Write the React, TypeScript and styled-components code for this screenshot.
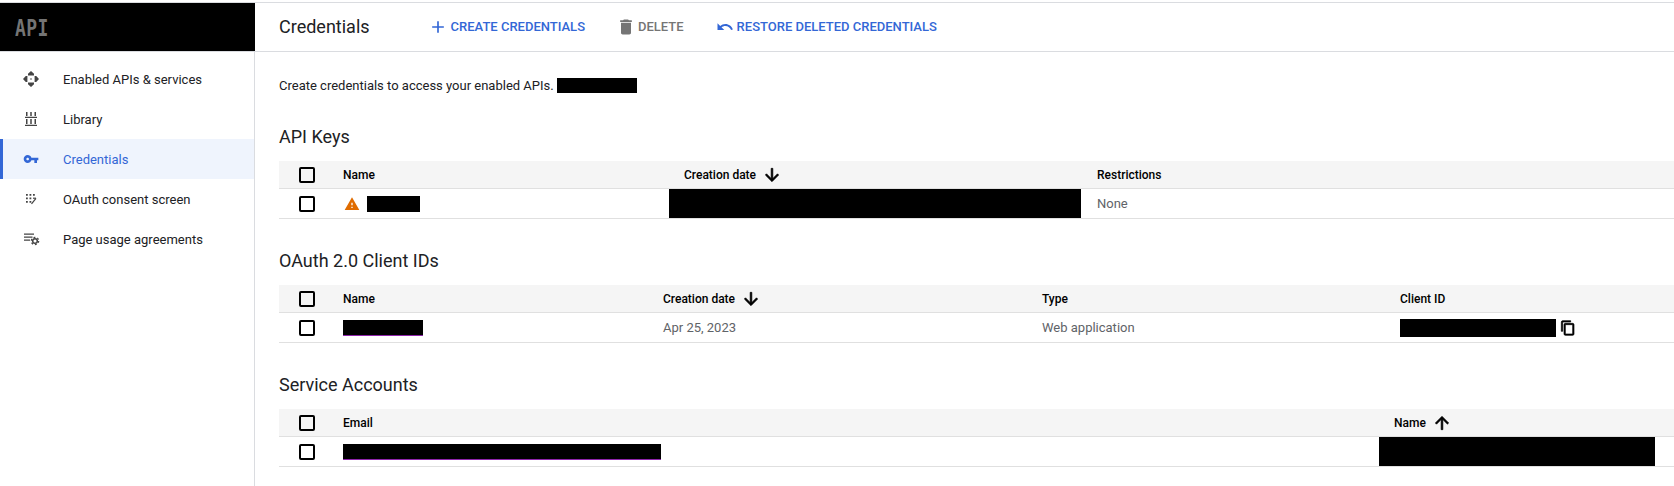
import React from 'react'
import styled, { createGlobalStyle } from 'styled-components'

const blue = '#3367d6'

const GlobalStyle = createGlobalStyle`
  html, body {
    margin: 0;
    background: #fff;
    font-family: Roboto, "Liberation Sans", sans-serif;
    font-size: 13px;
    color: #202124;
  }
`

const Page = styled.div`
  display: flex;
  margin-top: 2px;
  border-top: 1px solid #dadce0;
  height: 483px;
  overflow: hidden;
`

const Sidebar = styled.aside`
  flex: 0 0 255px;
  display: flex;
  flex-direction: column;
`

const Brand = styled.div`
  height: 48px;
  background: #000;
  border-bottom: 1px solid #dadce0;
  display: flex;
  align-items: center;
  padding-left: 15px;
`

const BrandMark = styled.span`
  font-family: "DejaVu Sans Mono", monospace;
  font-weight: 700;
  font-size: 18px;
  letter-spacing: 0.4px;
  color: #747474;
  transform: scaleY(1.25);
`

const Nav = styled.nav`
  flex: 1;
  padding-top: 7px;
  border-right: 1px solid #dadce0;
`

const NavItem = styled.div<{ $active?: boolean }>`
  height: 40px;
  display: flex;
  align-items: center;
  gap: 23px;
  padding-left: ${({ $active }) => ($active ? 19 : 22)}px;
  border-left: ${({ $active }) => ($active ? `3px solid ${blue}` : 'none')};
  background: ${({ $active }) => ($active ? '#eff4fd' : 'transparent')};
  color: ${({ $active }) => ($active ? blue : '#202124')};
`

const NavIcon = styled.svg`
  flex: 0 0 18px;
  width: 18px;
  height: 18px;
  fill: currentColor;
`

const Main = styled.main`
  flex: 1;
  min-width: 0;
`

const Toolbar = styled.header`
  height: 47px;
  padding: 0 0 1px 24px;
  border-bottom: 1px solid #dadce0;
  display: flex;
  align-items: center;
  gap: 31px;
`

const PageTitle = styled.h1`
  margin: 0 27px 0 0;
  font-size: 18px;
  font-weight: 400;
  color: #202124;
`

const ToolButton = styled.div<{ $gap?: number }>`
  display: flex;
  align-items: center;
  gap: ${({ $gap }) => $gap ?? 3}px;
  font-size: 13px;
  font-weight: 500;
  color: ${blue};
`

const DeleteButton = styled(ToolButton)`
  padding-right: 1px;
  color: #757575;
`

const Glyph = styled.svg<{ $size: number }>`
  flex: none;
  display: block;
  width: ${({ $size }) => $size}px;
  height: ${({ $size }) => $size}px;
  fill: currentColor;
`

const Content = styled.div`
  padding: 23px 0 0 24px;
`

const Intro = styled.p`
  margin: 0;
  height: 20px;
  display: flex;
  align-items: center;
  gap: 3px;
`

const Section = styled.section`
  margin-top: 30px;
`

const SectionTitle = styled.h2`
  margin: 0 0 12px;
  font-size: 18px;
  line-height: 24px;
  font-weight: 400;
  color: #202124;
`

const Row = styled.div<{ $columns: string; $head?: boolean }>`
  display: grid;
  grid-template-columns: ${({ $columns }) => $columns};
  height: ${({ $head }) => ($head ? 27 : 29)}px;
  align-items: center;
  border-bottom: 1px solid #e0e0e0;
  background: ${({ $head }) => ($head ? '#f5f5f5' : '#fff')};
  color: ${({ $head }) => ($head ? '#000' : '#5f6368')};
  font-size: ${({ $head }) => ($head ? 12 : 13)}px;
  font-weight: ${({ $head }) => ($head ? 500 : 400)};
`

const Cell = styled.div<{ $inset?: number }>`
  display: flex;
  align-items: center;
  height: 100%;
  min-width: 0;
  padding-left: ${({ $inset }) => $inset ?? 0}px;
`

const Checkbox = styled.span`
  box-sizing: border-box;
  display: block;
  width: 16px;
  height: 16px;
  margin-left: 20px;
  border: 2px solid #000;
  border-radius: 2px;
`

const Redacted = styled.span<{ $w: number; $h: number; $link?: boolean }>`
  display: block;
  flex: none;
  width: ${({ $w }) => $w}px;
  height: ${({ $h }) => $h}px;
  background: #000;
  border-bottom: ${({ $link }) => ($link ? '1px solid #8e24aa' : 'none')};
`

const SortIcon = styled(Glyph)`
  color: #000;
  margin-left: 6px;
  stroke: currentColor;
  stroke-width: 0.8;
`

const WarningIcon = styled(Glyph)`
  color: #e06c00;
  margin-right: 7px;
  margin-left: 1px;
`

const CopyIcon = styled(Glyph)`
  color: #000;
  margin-left: 4px;
  stroke: currentColor;
  stroke-width: 1;
`

const paths = {
  add: 'M19 13h-6v6h-2v-6H5v-2h6V5h2v6h6v2z',
  trash: 'M6 19c0 1.1.9 2 2 2h8c1.1 0 2-.9 2-2V7H6v12zM19 4h-3.5l-1-1h-5l-1 1H5v2h14V4z',
  undo: 'M12.5 8c-2.65 0-5.05.99-6.9 2.6L2 7v9h9l-3.62-3.62c1.39-1.16 3.16-1.88 5.12-1.88 3.54 0 6.55 2.31 7.6 5.5l2.37-.78C21.08 11.03 17.15 8 12.5 8z',
  warning: 'M1 21h22L12 2 1 21zm12-3h-2v-2h2v2zm0-4h-2v-4h2v4z',
  down: 'M20 12l-1.41-1.41L13 16.17V4h-2v12.17l-5.58-5.6L4 12l8 8 8-8z',
  up: 'M4 12l1.41 1.41L11 7.83V20h2V7.83l5.58 5.59L20 12l-8-8-8 8z',
  copy: 'M16 1H4c-1.1 0-2 .9-2 2v14h2V3h12V1zm3 4H8c-1.1 0-2 .9-2 2v14c0 1.1.9 2 2 2h11c1.1 0 2-.9 2-2V7c0-1.1-.9-2-2-2zm0 16H8V7h11v14z',
}

const ApisIcon = () => (
  <NavIcon viewBox="0 0 18 18" style={{ color: '#444' }}>
    <path d="M9 1l3 2.8v1.6H6V3.800zM9 17l-3-2.800v-1.600h6v1.600zM1 9l2.800-3h1.600v6H3.800zM17 9l-2.800 3h-1.600V6h1.600z" />
    <circle cx="9" cy="9" r="2.600" fill="#fff" />
    <circle cx="9" cy="9" r="1.100" fill="#999" />
  </NavIcon>
)

const LibraryIcon = () => (
  <NavIcon viewBox="0 0 18 18" style={{ color: '#444' }}>
    <path d="M4 2h1.500v4H4zM8.250 2h1.500v4h-1.500zM12.500 2H14v4h-1.500zM3 6.800h12v1.200H3zM4 9h1.500v5H4zM8.250 9h1.500v5h-1.500zM12.500 9H14v5h-1.500zM3 14.800h12V16H3z" />
  </NavIcon>
)

const KeyIcon = () => (
  <NavIcon viewBox="-1.500 -1.500 27 27">
    <path d="M12.65 10C11.83 7.67 9.610 6 7 6c-3.310 0-6 2.690-6 6s2.690 6 6 6c2.610 0 4.830-1.670 5.650-4H17v4h4v-4h2v-4H12.650zM7 14c-1.100 0-2-.9-2-2s.9-2 2-2 2 .9 2 2-.9 2-2 2z" />
  </NavIcon>
)

const ConsentIcon = () => (
  <NavIcon viewBox="0 0 18 18" style={{ color: '#444' }}>
    <path d="M4 4h1.800v1.800H4zM7.500 4h1.800v1.800H7.500zM11 4h1.800v1.800H11zM4 7.500h1.800v1.800H4zM7.500 7.500h1.800v1.800H7.500zM4 11h1.800v1.800H4zM7.500 11h1.800v1.800H7.500z" />
    <path d="M9.500 13.800l4.500-5.500" fill="none" stroke="currentColor" strokeWidth="1.200" />
    <path d="M11 8.200h3" fill="none" stroke="currentColor" strokeWidth="1.200" />
  </NavIcon>
)

const UsageIcon = () => (
  <NavIcon viewBox="0 0 18 18" style={{ color: '#444' }}>
    <path d="M2 3.500h10v1.200H2zM2 6.500h8.500v1.200H2zM2 9.500h6v1.200H2z" />
    <circle cx="13" cy="11" r="2.300" fill="none" stroke="currentColor" strokeWidth="1.500" />
    <circle cx="13" cy="11" r="3.700" fill="none" stroke="currentColor" strokeWidth="1.200" strokeDasharray="1.900 1.970" />
  </NavIcon>
)

const navItems = [
  { label: 'Enabled APIs & services', icon: <ApisIcon /> },
  { label: 'Library', icon: <LibraryIcon /> },
  { label: 'Credentials', icon: <KeyIcon />, active: true },
  { label: 'OAuth consent screen', icon: <ConsentIcon /> },
  { label: 'Page usage agreements', icon: <UsageIcon /> },
]

const keyColumns = '64px 326px 412px 1fr'
const clientColumns = '64px 320px 379px 358px 1fr'
const accountColumns = '64px 1036px 1fr'

function Icon({ d, size }: { d: string; size: number }) {
  return (
    <Glyph viewBox="0 0 24 24" $size={size}>
      <path d={d} />
    </Glyph>
  )
}

function Sort({ dir }: { dir: 'up' | 'down' }) {
  return (
    <SortIcon viewBox="0 0 24 24" $size={20}>
      <path d={paths[dir]} />
    </SortIcon>
  )
}

export default function App() {
  return (
    <>
      <GlobalStyle />
      <Page>
        <Sidebar>
          <Brand>
            <BrandMark>API</BrandMark>
          </Brand>
          <Nav>
            {navItems.map(item => (
              <NavItem key={item.label} $active={item.active}>
                {item.icon}
                {item.label}
              </NavItem>
            ))}
          </Nav>
        </Sidebar>
        <Main>
          <Toolbar>
            <PageTitle>Credentials</PageTitle>
            <ToolButton>
              <Icon d={paths.add} size={20} />
              CREATE CREDENTIALS
            </ToolButton>
            <DeleteButton $gap={2}>
              <Icon d={paths.trash} size={20} />
              DELETE
            </DeleteButton>
            <ToolButton>
              <Icon d={paths.undo} size={18} />
              RESTORE DELETED CREDENTIALS
            </ToolButton>
          </Toolbar>
          <Content>
            <Intro>
              Create credentials to access your enabled APIs.
              <Redacted $w={80} $h={15} />
            </Intro>

            <Section>
              <SectionTitle>API Keys</SectionTitle>
              <Row $columns={keyColumns} $head>
                <Cell><Checkbox /></Cell>
                <Cell>Name</Cell>
                <Cell $inset={15}>Creation date<Sort dir="down" /></Cell>
                <Cell $inset={16}>Restrictions</Cell>
              </Row>
              <Row $columns={keyColumns}>
                <Cell><Checkbox /></Cell>
                <Cell>
                  <WarningIcon viewBox="0 0 24 24" $size={16}>
                    <path d={paths.warning} />
                  </WarningIcon>
                  <Redacted $w={53} $h={16} />
                </Cell>
                <Cell><Redacted $w={412} $h={29} /></Cell>
                <Cell $inset={16}>None</Cell>
              </Row>
            </Section>

            <Section>
              <SectionTitle>OAuth 2.0 Client IDs</SectionTitle>
              <Row $columns={clientColumns} $head>
                <Cell><Checkbox /></Cell>
                <Cell>Name</Cell>
                <Cell>Creation date<Sort dir="down" /></Cell>
                <Cell>Type</Cell>
                <Cell>Client ID</Cell>
              </Row>
              <Row $columns={clientColumns}>
                <Cell><Checkbox /></Cell>
                <Cell><Redacted $w={80} $h={15} $link /></Cell>
                <Cell>Apr 25, 2023</Cell>
                <Cell>Web application</Cell>
                <Cell>
                  <Redacted $w={156} $h={18} />
                  <CopyIcon viewBox="0 0 24 24" $size={16}>
                    <path d={paths.copy} />
                  </CopyIcon>
                </Cell>
              </Row>
            </Section>

            <Section>
              <SectionTitle>Service Accounts</SectionTitle>
              <Row $columns={accountColumns} $head>
                <Cell><Checkbox /></Cell>
                <Cell>Email</Cell>
                <Cell $inset={15}>Name<Sort dir="up" /></Cell>
              </Row>
              <Row $columns={accountColumns}>
                <Cell><Checkbox /></Cell>
                <Cell><Redacted $w={318} $h={15} $link /></Cell>
                <Cell><Redacted $w={276} $h={29} /></Cell>
              </Row>
            </Section>
          </Content>
        </Main>
      </Page>
    </>
  )
}
